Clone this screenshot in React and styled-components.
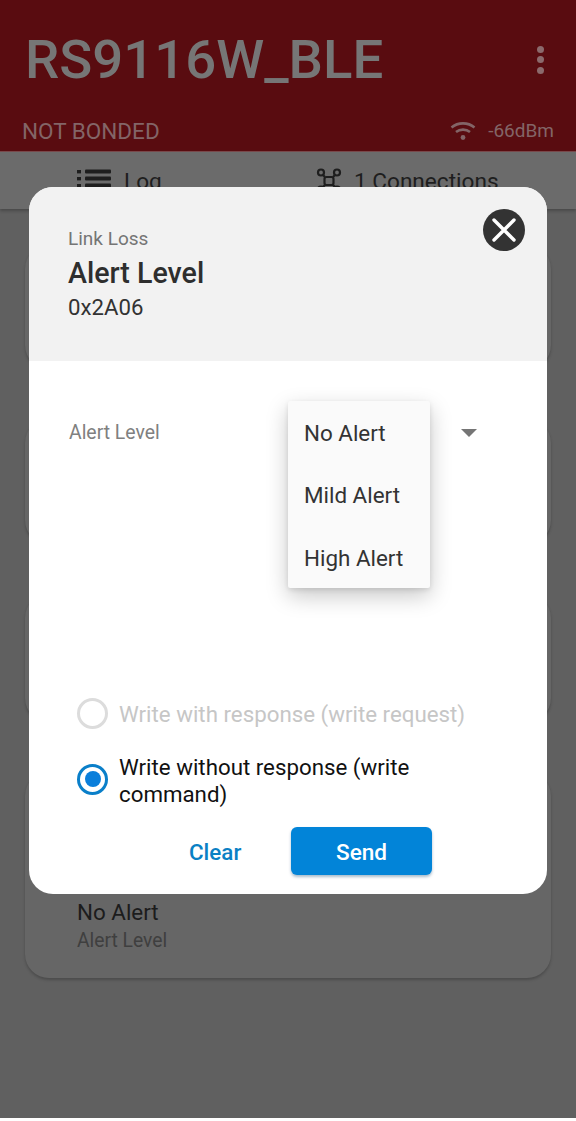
import React from "react";
import styled, { createGlobalStyle } from "styled-components";

const GlobalStyle = createGlobalStyle`
  html, body {
    margin: 0;
    padding: 0;
    background: #fff;
  }
  * {
    box-sizing: border-box;
  }
  body {
    font-family: Roboto, "Liberation Sans", sans-serif;
  }
`;

const Screen = styled.div`
  position: relative;
  width: 576px;
  height: 1118px;
  background: #606060;
  overflow: hidden;
`;

const AppBar = styled.header`
  height: 152px;
  background: #590c10;
  padding: 0 22px 0 22px;
  display: flex;
  flex-direction: column;
  border-bottom: 1px solid #7a4a4c;
`;

const TitleRow = styled.div`
  display: flex;
  justify-content: space-between;
  align-items: center;
  padding-top: 29px;
`;

const Title = styled.h1`
  margin: 0 0 0 3px;
  font-size: 54.5px;
  line-height: 61px;
  font-weight: 500;
  color: #767676;
`;

const MoreDots = styled.div`
  display: flex;
  flex-direction: column;
  gap: 3.5px;
  margin-right: 10px;
  span {
    width: 7px;
    height: 7px;
    border-radius: 50%;
    background: #8b6a6c;
  }
`;

const StatusRow = styled.div`
  margin-top: 28px;
  display: flex;
  justify-content: space-between;
  align-items: center;
  font-size: 22.5px;
  line-height: 26px;
  color: #836567;
`;

const Signal = styled.div`
  display: flex;
  align-items: center;
  gap: 12px;
  font-size: 19px;
`;

const Tabs = styled.nav`
  height: 57px;
  background: #6b6b6b;
  display: flex;
  box-shadow: 0 2px 3px rgba(0, 0, 0, 0.25);
`;

const Tab = styled.div`
  display: flex;
  gap: ${(p) => p.$gap}px;
  padding: 16px 0 0 ${(p) => p.$left}px;
  width: ${(p) => p.$width}px;
  font-size: 22.6px;
  line-height: 27px;
  color: #1e1e1e;
  svg {
    flex: none;
  }
`;

const CardList = styled.main`
  padding: 36px 25px 0;
  display: flex;
  flex-direction: column;
  gap: 50px;
`;

const Card = styled.section`
  height: ${(p) => p.$height}px;
  background: #666;
  border-radius: 24px;
  box-shadow: 0 2px 3px rgba(0, 0, 0, 0.22);
  display: flex;
  flex-direction: column;
  justify-content: flex-end;
  padding: 0 52px 24px;
`;

const CardValue = styled.div`
  font-size: 22.4px;
  line-height: 29px;
  color: #1c1c1c;
`;

const CardLabel = styled.div`
  font-size: 19.3px;
  line-height: 27px;
  color: #3f3f3f;
`;

const Modal = styled.div`
  position: absolute;
  top: 187px;
  left: 29px;
  width: 518px;
  height: 707px;
  border-radius: 24px;
  background: #fff;
  overflow: hidden;
  display: flex;
  flex-direction: column;
`;

const ModalHeader = styled.div`
  position: relative;
  height: 174px;
  flex: none;
  background: #f2f2f2;
  padding: 40px 39px 0;
`;

const CloseButton = styled.button`
  position: absolute;
  top: 22px;
  right: 22px;
  width: 42px;
  height: 42px;
  padding: 0;
  border: 0;
  border-radius: 50%;
  background: #333;
  display: flex;
  align-items: center;
  justify-content: center;
`;

const ServiceName = styled.div`
  font-size: 19px;
  line-height: 24px;
  color: #757575;
`;

const CharName = styled.div`
  margin-top: 6px;
  font-size: 28.6px;
  line-height: 32px;
  font-weight: 500;
  color: #2e2e2e;
`;

const CharUuid = styled.div`
  margin-top: 4px;
  font-size: 22.2px;
  line-height: 28px;
  color: #333;
`;

const ModalBody = styled.div`
  flex: 1;
  display: flex;
  flex-direction: column;
  padding: 0 48px 19px;
`;

const FieldRow = styled.div`
  position: relative;
  height: 327px;
  flex: none;
  padding: 60px 0 0;
`;

const FieldLabel = styled.div`
  margin-left: -8px;
  font-size: 19.4px;
  line-height: 24px;
  color: #808080;
`;

const CaretIcon = styled.div`
  position: absolute;
  top: 68px;
  left: 384px;
  width: 0;
  height: 0;
  border-left: 8px solid transparent;
  border-right: 8px solid transparent;
  border-top: 8px solid #757575;
`;

const Menu = styled.ul`
  position: absolute;
  top: 40px;
  left: 211px;
  width: 142px;
  height: 187px;
  margin: 0;
  padding: 0;
  list-style: none;
  background: #fafafa;
  border-radius: 2px;
  box-shadow: 0 8px 22px rgba(0, 0, 0, 0.22), 0 2px 5px rgba(0, 0, 0, 0.1);
  display: flex;
  flex-direction: column;
`;

const MenuItem = styled.li`
  flex: 1;
  display: flex;
  align-items: center;
  padding: 2px 0 0 16px;
  font-size: 22.4px;
  color: #333;
  white-space: nowrap;
`;

const RadioRow = styled.label`
  display: flex;
  align-items: center;
  gap: 11px;
  min-height: ${(p) => p.$height}px;
  margin-top: ${(p) => p.$top || 0}px;
  font-size: 22.3px;
  line-height: 27px;
  color: ${(p) => (p.$disabled ? "#c6c6c6" : "#111")};
`;

const RadioText = styled.span`
  padding-top: 3px;
`;

const RadioMark = styled.span`
  flex: none;
  width: 31px;
  height: 31px;
  border-radius: 50%;
  border: 3px solid ${(p) => (p.$checked ? "#0a7fc9" : "#dcdcdc")};
  display: flex;
  align-items: center;
  justify-content: center;
  &::after {
    content: "";
    display: ${(p) => (p.$checked ? "block" : "none")};
    width: 16px;
    height: 16px;
    border-radius: 50%;
    background: #0a7fdb;
  }
`;

const Actions = styled.div`
  margin-top: auto;
  display: flex;
  align-items: center;
  gap: 50px;
  padding-left: 112px;
`;

const ClearButton = styled.button`
  width: 52px;
  padding: 1px 0 0;
  border: 0;
  background: none;
  font: 500 22.4px Roboto, sans-serif;
  color: #0a80c4;
`;

const SendButton = styled.button`
  width: 141px;
  height: 48px;
  padding: 3px 0 0;
  border: 0;
  border-radius: 6px;
  background: #0284d8;
  box-shadow: 0 2px 3px rgba(0, 60, 110, 0.35);
  font: 500 22.6px Roboto, sans-serif;
  color: #fff;
`;

const WifiIcon = () => (
  <svg width="26" height="20" viewBox="0 0 26 20" fill="none" stroke="#836567" strokeWidth="2.6">
    <path d="M1.5 6.5C8 1 18 1 24.5 6.5" />
    <path d="M6 11c4-3.2 10-3.2 14 0" />
    <circle cx="13" cy="16.5" r="2.4" fill="#836567" stroke="none" />
  </svg>
);

const ListIcon = () => (
  <svg width="34" height="24" viewBox="0 0 34 24" fill="#1e1e1e">
    <rect x="0" y="2" width="4" height="3.4" />
    <rect x="0" y="9" width="4" height="3.4" />
    <rect x="0" y="16" width="4" height="3.4" />
    <rect x="8" y="1.5" width="26" height="4" rx="1" />
    <rect x="8" y="8.5" width="26" height="4" rx="1" />
    <rect x="8" y="15.5" width="26" height="4" rx="1" />
  </svg>
);

const NodesIcon = () => (
  <svg width="26" height="26" viewBox="0 0 26 26" fill="none" stroke="#1e1e1e" strokeWidth="2.2">
    <circle cx="5" cy="4.5" r="3" />
    <circle cx="21" cy="4.5" r="3" />
    <circle cx="5" cy="21.5" r="3" />
    <circle cx="21" cy="21.5" r="3" />
    <rect x="8.5" y="9" width="9" height="8" rx="2" />
    <path d="M7 7l2 2M19 7l-2 2M7 19l2-2M19 19l-2-2" />
  </svg>
);

const CloseIcon = () => (
  <svg width="26" height="26" viewBox="0 0 26 26" stroke="#fff" strokeWidth="3.4" strokeLinecap="round">
    <path d="M3 3l20 20M23 3L3 23" />
  </svg>
);

const alertLevels = ["No Alert", "Mild Alert", "High Alert"];

export default function App() {
  return (
    <>
      <GlobalStyle />
      <Screen>
        <AppBar>
          <TitleRow>
            <Title>RS9116W_BLE</Title>
            <MoreDots>
              <span />
              <span />
              <span />
            </MoreDots>
          </TitleRow>
          <StatusRow>
            <span>NOT BONDED</span>
            <Signal>
              <WifiIcon />
              <span>-66dBm</span>
            </Signal>
          </StatusRow>
        </AppBar>
        <Tabs>
          <Tab $left={77} $gap={13} $width={288}>
            <ListIcon />
            <span>Log</span>
          </Tab>
          <Tab $left={28} $gap={12} $width={288}>
            <NodesIcon />
            <span>1 Connections</span>
          </Tab>
        </Tabs>
        <CardList>
          <Card $height={124} />
          <Card $height={125} />
          <Card $height={128} />
          <Card $height={206}>
            <CardValue>No Alert</CardValue>
            <CardLabel>Alert Level</CardLabel>
          </Card>
        </CardList>
        <Modal>
          <ModalHeader>
            <ServiceName>Link Loss</ServiceName>
            <CharName>Alert Level</CharName>
            <CharUuid>0x2A06</CharUuid>
            <CloseButton aria-label="Close">
              <CloseIcon />
            </CloseButton>
          </ModalHeader>
          <ModalBody>
            <FieldRow>
              <FieldLabel>Alert Level</FieldLabel>
              <CaretIcon />
              <Menu>
                {alertLevels.map((level) => (
                  <MenuItem key={level}>{level}</MenuItem>
                ))}
              </Menu>
            </FieldRow>
            <RadioRow $disabled $height={50}>
              <RadioMark />
              <RadioText>Write with response (write request)</RadioText>
            </RadioRow>
            <RadioRow $height={66} $top={8}>
              <RadioMark $checked />
              <RadioText>Write without response (write command)</RadioText>
            </RadioRow>
            <Actions>
              <ClearButton>Clear</ClearButton>
              <SendButton>Send</SendButton>
            </Actions>
          </ModalBody>
        </Modal>
      </Screen>
    </>
  );
}
